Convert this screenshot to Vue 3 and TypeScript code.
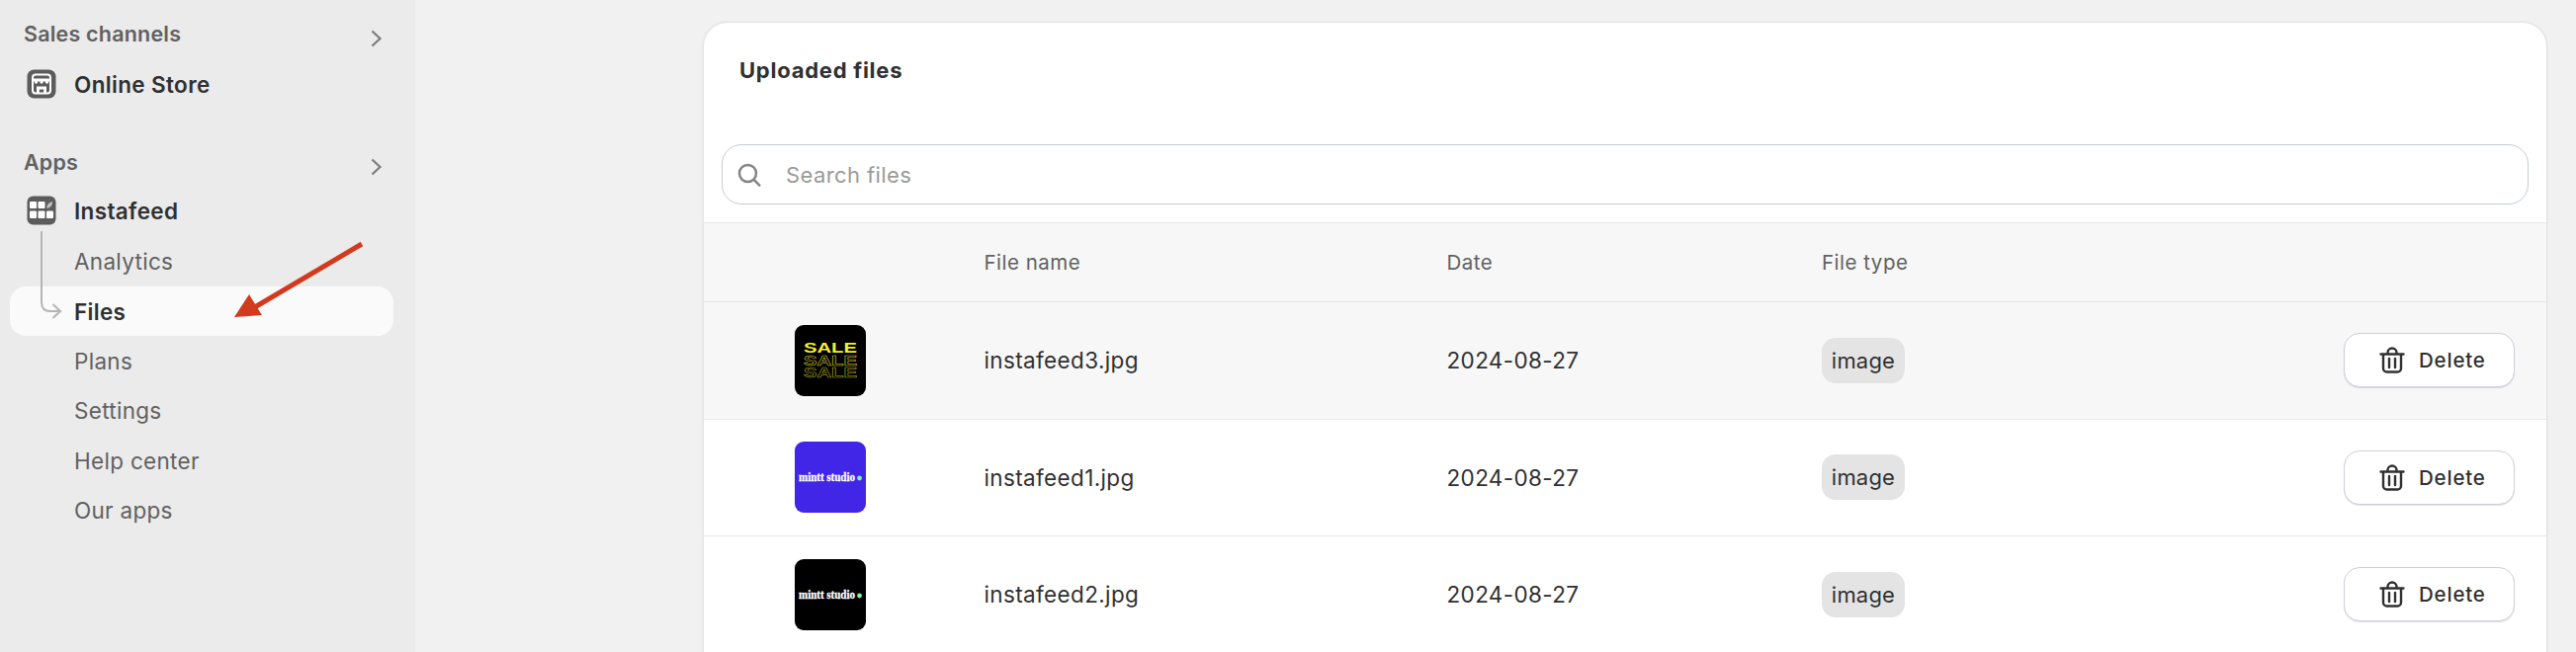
<script setup lang="ts">
interface FileRow {
  id: string
  name: string
  date: string
  type: string
  art: 'sale' | 'blue' | 'black'
}

const files: FileRow[] = [
  { id: 'a', name: 'instafeed3.jpg', date: '2024-08-27', type: 'image', art: 'sale' },
  { id: 'b', name: 'instafeed1.jpg', date: '2024-08-27', type: 'image', art: 'blue' },
  { id: 'c', name: 'instafeed2.jpg', date: '2024-08-27', type: 'image', art: 'black' },
]

const subItems = ['Analytics', 'Files', 'Plans', 'Settings', 'Help center', 'Our apps']
</script>

<template>
  <div class="page">
    <aside class="sidebar">
      <div class="section-head">
        <span>Sales channels</span>
        <svg class="chev" viewBox="0 0 14 20" width="14" height="20"><path d="M2.5 2.5 10.5 10l-8 7.5" /></svg>
      </div>
      <div class="nav-main">
        <svg class="app-icon" viewBox="0 0 30 30" width="30" height="30">
          <rect x=".5" y=".5" width="29" height="29" rx="7" fill="#5c5c5c" />
          <rect x="6" y="5.500" width="18" height="19" rx="3" fill="none" stroke="#fff" stroke-width="2" />
          <rect x="5" y="9.500" width="20" height="3" fill="#fff" />
          <circle cx="9.500" cy="13" r="1.700" fill="#fff" />
          <circle cx="15" cy="13" r="1.700" fill="#fff" />
          <circle cx="20.500" cy="13" r="1.700" fill="#fff" />
          <path d="M10 24v-6.500h10V24h-2.800v-3.500h-4.400V24z" fill="#fff" />
        </svg>
        <span>Online Store</span>
      </div>

      <div class="section-head apps">
        <span>Apps</span>
        <svg class="chev" viewBox="0 0 14 20" width="14" height="20"><path d="M2.5 2.5 10.5 10l-8 7.5" /></svg>
      </div>
      <div class="nav-main insta">
        <svg class="app-icon" viewBox="0 0 30 30" width="30" height="30">
          <rect x=".5" y=".5" width="29" height="29" rx="6" fill="#5c5c5c" />
          <rect x="3" y="6" width="7" height="7" rx="1" fill="#fff" />
          <rect x="11.500" y="6" width="7" height="7" rx="1" fill="#fff" />
          <path d="M20.500 13c-.6-3 1.500-6 5.500-7 .4 3-1.200 6-5.500 7z" fill="#bdbdbd" />
          <rect x="3" y="15.500" width="7" height="7.500" rx="1" fill="#fff" />
          <rect x="11.500" y="15.500" width="7" height="7.500" rx="1" fill="#fff" />
          <rect x="20" y="15.500" width="7" height="7.500" rx="1" fill="#fff" />
        </svg>
        <span>Instafeed</span>
      </div>
      <nav class="sub-list">
        <a v-for="item in subItems" :key="item" class="sub-item" :class="{ active: item === 'Files' }">{{ item }}</a>
      </nav>
    </aside>

    <main class="content">
      <section class="card">
        <h2 class="card-title">Uploaded files</h2>
        <div class="search-wrap">
          <div class="search">
            <svg viewBox="0 0 24 24" width="24" height="24" class="search-icon">
              <circle cx="10.500" cy="10.500" r="8.500" />
              <path d="M16.800 17 23 23.300" />
            </svg>
            <span class="placeholder">Search files</span>
          </div>
        </div>
        <div class="row head">
          <div></div>
          <div>File name</div>
          <div>Date</div>
          <div>File type</div>
          <div></div>
        </div>
        <div v-for="(f, i) in files" :key="f.id" class="row body" :class="{ hovered: i === 0 }">
          <div class="thumb-cell">
            <div class="thumb" :class="f.art">
              <svg v-if="f.art === 'sale'" viewBox="0 0 72 72" width="72" height="72">
                <text x="9" y="28" textLength="54" lengthAdjust="spacingAndGlyphs" class="sale solid">SALE</text>
                <text x="9" y="40.500" textLength="54" lengthAdjust="spacingAndGlyphs" class="sale line">SALE</text>
                <text x="9" y="53" textLength="54" lengthAdjust="spacingAndGlyphs" class="sale line dim">SALE</text>
              </svg>
              <svg v-else viewBox="0 0 72 72" width="72" height="72">
                <text x="4" y="40" textLength="57" lengthAdjust="spacingAndGlyphs" class="brand">mintt studio</text>
                <circle cx="65.500" cy="37" r="2.400" fill="#7df2b0" />
              </svg>
            </div>
          </div>
          <div class="cell">{{ f.name }}</div>
          <div class="cell">{{ f.date }}</div>
          <div><span class="badge">{{ f.type }}</span></div>
          <div class="action">
            <button class="delete" type="button">
              <svg viewBox="0 0 26 27" width="26" height="27" class="trash">
                <path d="M1.500 7.500h23M4 7.500V22a3.500 3.500 0 0 0 3.500 3.500h11A3.500 3.500 0 0 0 22 22V7.500M8.500 7.500V6a4.500 4.500 0 0 1 9 0v1.500M10 12v9M16 12v9" />
              </svg>
              <span>Delete</span>
            </button>
          </div>
        </div>
      </section>
    </main>

    <svg class="overlay-tree" width="40" height="100" viewBox="0 0 40 100">
      <path d="M2 1v72q0 9 9 9h10M13.500 75l7.500 7-7.500 7" />
    </svg>
    <svg class="overlay-arrow" width="140" height="90" viewBox="0 0 140 90">
      <path d="M130 3 20 68" class="shaft" />
      <path d="M1 77 16 54 29 75z" class="head-tri" />
    </svg>
  </div>
</template>

<style scoped>
.page {
  position: relative;
  display: flex;
  width: 2606px;
  height: 660px;
  overflow: hidden;
  background: #f1f1f1;
  font-family: Inter, "Liberation Sans", sans-serif;
  font-size: 22px;
  color: #303030;
}
.sidebar {
  width: 420px;
  flex: none;
  background: #ebebeb;
  padding-top: 10px;
  box-sizing: border-box;
}
.section-head {
  height: 50px;
  display: flex;
  align-items: center;
  justify-content: space-between;
  padding: 0 32px 0 24px;
  font-size: 21.500px;
  font-weight: 600;
  letter-spacing: .2px;
  color: #616161;
}
.section-head > span { position: relative; top: -1px; }
.chev { position: relative; top: 4px; fill: none; stroke: #7c7c7c; stroke-width: 2.200; }
.nav-main {
  height: 50px;
  display: flex;
  align-items: center;
  gap: 18px;
  padding-left: 27px;
  font-weight: 600;
  font-size: 22.500px;
  letter-spacing: .35px;
}
.app-icon { flex: none; }
.apps { margin-top: 30px; }
.insta { margin-top: -2px; }
.sub-list {
  display: flex;
  flex-direction: column;
  padding: 0 22px 0 10px;
  margin-top: 1.500px;
}
.sub-item {
  height: 50.400px;
  display: flex;
  align-items: center;
  padding-left: 65px;
  border-radius: 16px;
  color: #616161;
  font-size: 22.500px;
  letter-spacing: .3px;
}
.sub-item.active {
  background: #fafafa;
  color: #303030;
  font-weight: 600;
}
.content {
  flex: 1;
  padding: 23px 30px 0 292px;
  min-width: 0;
}
.card {
  background: #fff;
  border-radius: 24px 24px 0 0;
  box-shadow: 0 0 3px rgba(0, 0, 0, .16);
  height: 700px;
}
.card-title {
  margin: 0;
  padding: 35px 36px 0;
  height: 123px;
  box-sizing: border-box;
  font-size: 22px;
  font-weight: 650;
  line-height: 27px;
  letter-spacing: .75px;
}
.search-wrap { padding: 0 18px; height: 79px; box-sizing: border-box; }
.search {
  height: 61px;
  box-sizing: border-box;
  border: 1px solid #c5ccd6;
  border-radius: 20px;
  display: flex;
  align-items: center;
  padding-left: 16px;
  gap: 24px;
}
.search-icon { fill: none; stroke: #858585; stroke-width: 2.500; flex: none; position: relative; left: -1px; }
.placeholder { color: #9a9a9a; font-size: 22px; letter-spacing: .4px; }
.row {
  display: grid;
  grid-template-columns: 283.500px 468px 379.500px 1fr 220px;
  align-items: center;
  border-top: 1px solid #e8e8e8;
  box-sizing: border-box;
}
.row.head {
  height: 80px;
  background: #f7f7f7;
  color: #616161;
  font-size: 20.500px;
  letter-spacing: .5px;
}
.row.body { height: 118.500px; font-size: 22.500px; letter-spacing: .36px; color: #303030; }
.row.hovered { background: #f7f7f7; }
.thumb-cell { padding-left: 92px; }
.thumb {
  width: 72px;
  height: 72px;
  border-radius: 9px;
  overflow: hidden;
  background: #000;
}
.thumb svg { display: block; }
.thumb.blue { background: #4226e8; }
.sale { font-family: "Liberation Sans", sans-serif; font-weight: 700; font-size: 14px; letter-spacing: 0; }
.sale.solid { fill: #f6ee2e; }
.sale.line { fill: none; stroke: #c9c226; stroke-width: .5; }
.sale.dim { stroke: #a8a21f; }
.brand { font-family: "Liberation Serif", serif; font-weight: 700; font-size: 13px; letter-spacing: 0; fill: #fff; stroke: #fff; stroke-width: .3; }
.badge {
  display: inline-flex;
  align-items: center;
  justify-content: center;
  width: 84px;
  height: 46px;
  border-radius: 14px;
  background: #e4e4e4;
  color: #303030;
  font-size: 22px;
  letter-spacing: .2px;
}
.action { display: flex; justify-content: flex-end; padding-right: 32px; }
.delete {
  width: 173px;
  height: 55px;
  border: 1px solid #ccd0da;
  border-radius: 16px;
  background: #fff;
  box-shadow: 0 1px 1px rgba(0, 0, 0, .12);
  display: flex;
  align-items: center;
  padding: 0 0 0 35px;
  gap: 14px;
  font: 500 20.500px Inter, "Liberation Sans", sans-serif;
  letter-spacing: .8px;
  color: #303030;
}
.trash { fill: none; stroke: #303030; stroke-width: 2.400; stroke-linecap: round; flex: none; }
.overlay-tree {
  position: absolute;
  left: 40px;
  top: 233px;
  fill: none;
  stroke: #b5b5b5;
  stroke-width: 2;
}
.overlay-arrow {
  position: absolute;
  left: 236px;
  top: 244px;
}
.shaft { fill: none; stroke: #d13a1f; stroke-width: 5; }
.head-tri { fill: #d13a1f; }
</style>
